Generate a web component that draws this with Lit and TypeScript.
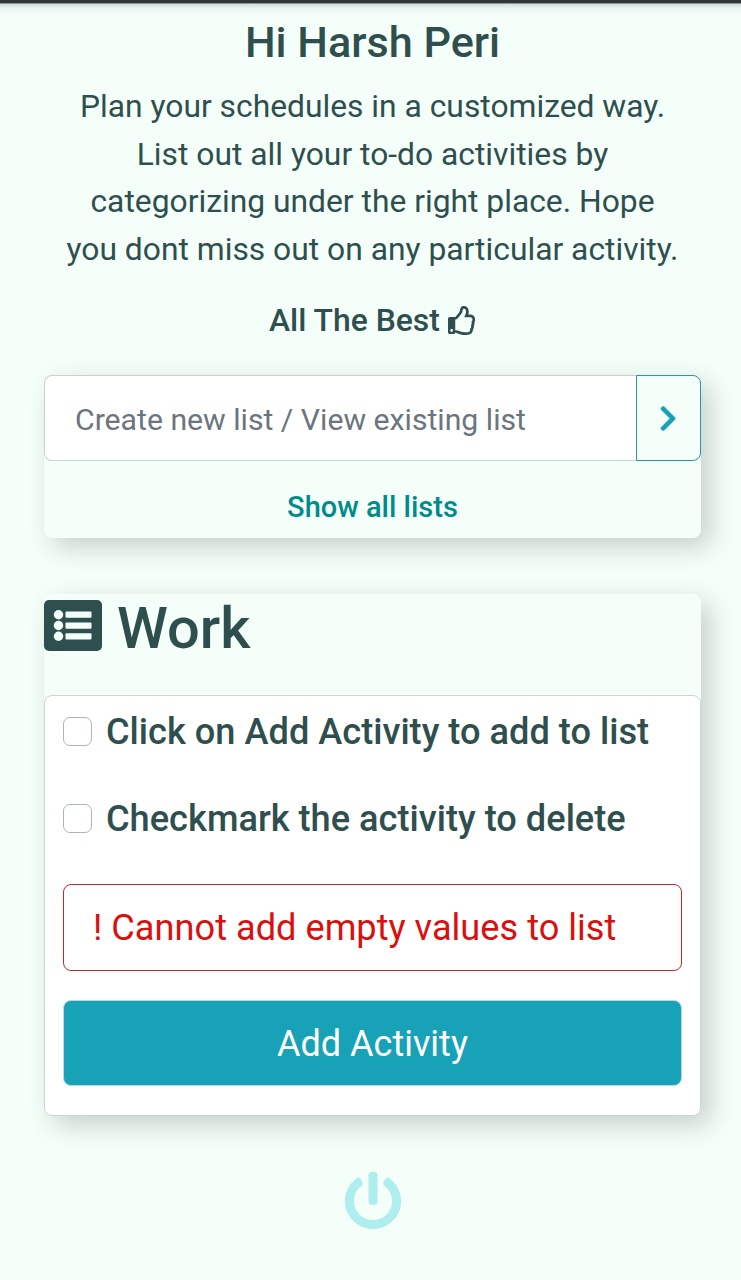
import { LitElement, html, css } from "lit";
import { customElement, state } from "lit/decorators.js";

const THUMB =
  "M466.27 286.69C475.04 271.84 480 256 480 236.85c0-44.015-37.218-85.58-85.82-85.58H357.7c4.92-12.81 8.85-28.13 8.85-46.54C366.55 31.936 328.86 0 271.28 0c-61.607 0-58.093 94.933-71.76 108.6-22.747 22.747-49.615 66.447-68.76 83.4H32c-17.673 0-32 14.327-32 32v240c0 17.673 14.327 32 32 32h64c14.893 0 27.408-10.174 30.978-23.95 44.509 1.001 75.06 39.94 177.802 39.94 7.22 0 15.22.01 22.22.01 77.117 0 111.986-39.423 112.94-95.33 13.319-18.425 20.299-43.122 17.34-66.99 9.854-18.452 13.664-40.343 8.99-62.99zm-61.75 53.83c12.56 21.13 1.26 49.41-13.94 57.57 7.7 48.78-17.608 65.9-53.12 65.9h-37.82c-71.639 0-118.029-37.82-171.64-37.82V240h10.92c28.36 0 67.98-70.89 94.54-97.46 28.36-28.36 18.91-75.63 37.82-94.54 47.27 0 47.27 32.98 47.27 56.73 0 39.17-28.36 56.72-28.36 94.54h103.99c21.11 0 37.73 18.91 37.82 37.82.09 18.9-12.82 37.81-22.27 37.81 13.489 14.555 16.371 45.236-5.21 65.62zM88 432c0 13.255-10.745 24-24 24s-24-10.745-24-24 10.745-24 24-24 24 10.745 24 24z";
const POWER =
  "M400 54.1c63 45 104 118.6 104 201.9 0 136.8-110.8 247.7-247.5 248C120 504.3 8.2 393 8 256.4 7.9 173.1 48.9 99.3 111.8 54.2c11.7-8.3 28-4.8 35 7.7L162.6 90c5.9 10.5 3.1 23.8-6.6 31-41.5 30.8-68 79.6-68 134.9-.1 92.3 74.5 168.1 168 168.1 91.6 0 168.6-74.2 168-169.1-.3-51.8-24.7-101.8-68.1-134-9.7-7.2-12.4-20.5-6.5-30.9l15.8-28.1c7-12.4 23.2-16.1 34.8-7.8zM296 264V24c0-13.3-10.7-24-24-24h-32c-13.3 0-24 10.7-24 24v240c0 13.3 10.7 24 24 24h32c13.3 0 24-10.7 24-24z";
const CHEVRON =
  "M285.476 272.971L91.132 467.314c-9.373 9.373-24.569 9.373-33.941 0l-22.667-22.667c-9.357-9.357-9.375-24.522-.04-33.901L188.505 256 34.484 101.255c-9.335-9.379-9.317-24.544.04-33.901l22.667-22.667c9.373-9.373 24.569-9.373 33.941 0L285.475 239.03c9.373 9.372 9.373 24.568.001 33.941z";

@customElement("app-root")
export class AppRoot extends LitElement {
  @state() private items = [
    { text: "Click on Add Activity to add to list", done: false },
    { text: "Checkmark the activity to delete", done: false },
  ];

  static styles = css`
    :host {
      display: block;
      box-sizing: border-box;
      min-height: 1280px;
      background: #f5fffa;
      color: #2f4f4f;
      font-family: Roboto, sans-serif;
      overflow: hidden;
    }
    * { box-sizing: border-box; }
    svg { display: block; flex: none; }
    .bar { height: 15px; background: linear-gradient(#323537 0 3px, #8f9997 3px 4px, #d3dedb 4px, #e8f3ef 8px, #f5fffa 15px); }
    .intro { display: flex; flex-direction: column; align-items: center; height: 360px; margin-left: 4px; white-space: nowrap; }
    h1 { margin: 0; padding-top: 1px; font-size: 43.2px; line-height: 53px; font-weight: 500; }
    .lead { margin: 14px 0 0; font-size: 31.8px; line-height: 47.6px; text-align: center; }
    .best { display: flex; align-items: center; gap: 8px; margin-top: 23px; margin-left: -1px; font-size: 31.9px; line-height: 48px; font-weight: 500; }
    .best svg { margin-top: 1px; }
    .card { width: 657px; margin-left: 44px; border-radius: 8px; background: #f5fffa; box-shadow: 9px 9px 26px rgba(0, 0, 0, 0.19); }
    .search { height: 163px; }
    .row { display: flex; height: 86px; }
    .field { flex: 1; display: flex; align-items: center; padding: 2px 0 0 30px; background: #fff; border: 1px solid #c9d1d1; border-right: 0; border-radius: 8px 0 0 8px; color: #6c757d; font-size: 30.2px; white-space: nowrap; }
    .go { display: flex; align-items: center; justify-content: center; width: 65px; padding: 0; background: #f5fffa; border: 1.5px solid #2a97a4; border-radius: 0 8px 8px 0; }
    .all { height: 77px; padding-top: 14px; text-align: center; color: #008b8b; font-size: 29px; line-height: 64px; font-weight: 500; }
    .list { height: 522px; margin-top: 56px; }
    .head { display: flex; height: 101px; padding-top: 6px; gap: 15px; }
    h2 { margin: -6px 0 0; font-size: 57.8px; line-height: 68px; font-weight: 500; }
    .box { height: 421px; padding: 16px 18px; background: #fff; border: 1px solid #ccd5d3; border-radius: 8px; }
    .item { display: flex; align-items: center; gap: 14px; height: 38px; margin-bottom: 49px; font-size: 36.2px; font-weight: 500; white-space: nowrap; }
    .check { flex: none; width: 29px; height: 29px; border: 1.3px solid #adb5b5; border-radius: 7px; background: #fff; }
    .warn { display: flex; align-items: center; height: 87px; margin-top: -2px; padding-left: 29px; border: 1.5px solid #c2282c; border-radius: 8px; color: #d8100f; font-size: 36.2px; white-space: nowrap; }
    .add { display: block; width: 619px; height: 86px; margin-top: 29px; padding: 1px 0 0; border: 1px solid #b7dbe0; border-radius: 8px; background: #17a2b8; color: #fff; font: 400 36px Roboto, sans-serif; }
    .power { display: flex; justify-content: center; margin: 56px 0 0 4px; }
  `;

  render() {
    return html`
      <div class="bar"></div>
      <header class="intro">
        <h1>Hi Harsh Peri</h1>
        <p class="lead">
          Plan your schedules in a customized way.<br />List out all your to-do activities by<br />categorizing under the right place. Hope<br />you dont miss out on any particular activity.
        </p>
        <div class="best">
          <span>All The Best</span>
          <svg width="27.2" height="29" viewBox="0 0 480 512" fill="#2f4f4f"><path d=${THUMB} /></svg>
        </div>
      </header>
      <section class="card search">
        <div class="row">
          <div class="field"><span>Create new list / View existing list</span></div>
          <button class="go" aria-label="Open">
            <svg width="18.2" height="29" viewBox="0 0 320 512" fill="#17a2b8"><path d=${CHEVRON} /></svg>
          </button>
        </div>
        <div class="all">Show all lists</div>
      </section>
      <section class="card list">
        <div class="head">
          <svg width="58" height="51" viewBox="0 0 58 51">
            <rect width="58" height="51" rx="5" fill="#2f4f4f" />
            <g fill="#f5fffa">
              <circle cx="14.5" cy="14.7" r="4.7" /><circle cx="14.5" cy="25.5" r="4.7" /><circle cx="14.5" cy="36.3" r="4.7" />
              <rect x="21.5" y="11.5" width="26" height="6.3" rx="1" /><rect x="21.5" y="22.4" width="26" height="6.3" rx="1" /><rect x="21.5" y="33.2" width="26" height="6.3" rx="1" />
            </g>
          </svg>
          <h2>Work</h2>
        </div>
        <div class="box">
          ${this.items.map((i) => html`<div class="item"><span class="check"></span><span>${i.text}</span></div>`)}
          <div class="warn"><span>! Cannot add empty values to list</span></div>
          <button class="add">Add Activity</button>
        </div>
      </section>
      <div class="power">
        <svg width="58" height="58" viewBox="0 0 512 512" fill="#afeeee"><path d=${POWER} /></svg>
      </div>
    `;
  }
}
